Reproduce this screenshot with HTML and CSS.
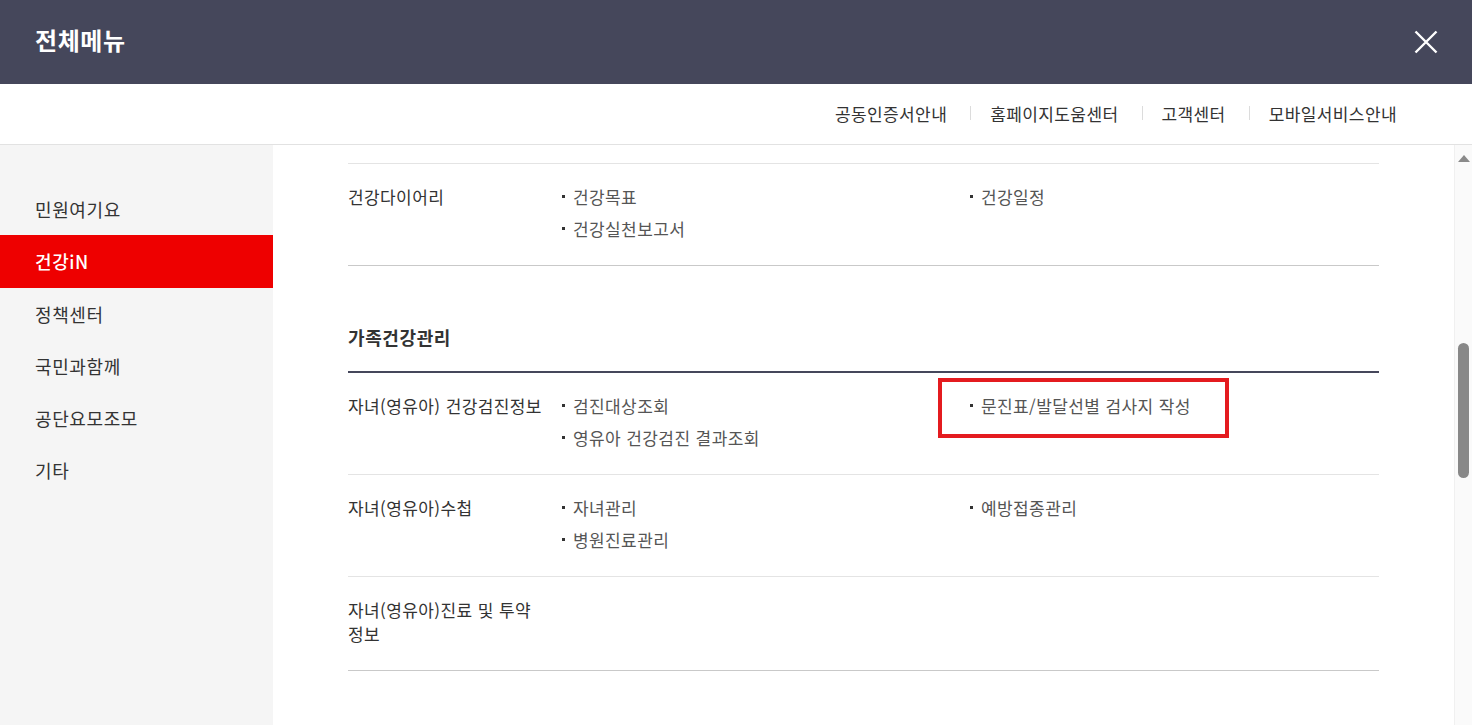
FILE: index.html
```html
<!DOCTYPE html>
<html lang="ko">
<head>
	<meta charset="UTF-8">
	<title>전체메뉴</title>
	<link rel="stylesheet" href="styles.css">
</head>
<body>
	<div class="allmenu">
		<header class="menu-head">
			<h1 class="menu-title">전체메뉴</h1>
			<button class="btn-close" type="button" aria-label="닫기">
				<svg width="24" height="24" viewBox="0 0 24 24"><path d="M1.5 1.5 L22.5 22.5 M22.5 1.5 L1.5 22.5" stroke="#fff" stroke-width="2.4" fill="none"/></svg>
			</button>
		</header>

		<nav class="util">
			<a href="#">공동인증서안내</a>
			<span class="bar"></span>
			<a href="#">홈페이지도움센터</a>
			<span class="bar"></span>
			<a href="#">고객센터</a>
			<span class="bar"></span>
			<a href="#">모바일서비스안내</a>
		</nav>

		<div class="menu-body">
			<ul class="side">
				<li><a href="#">민원여기요</a></li>
				<li class="on"><a href="#">건강iN</a></li>
				<li><a href="#">정책센터</a></li>
				<li><a href="#">국민과함께</a></li>
				<li><a href="#">공단요모조모</a></li>
				<li><a href="#">기타</a></li>
			</ul>

			<div class="menu-area">
				<ul class="menu-list">
					<li class="row">
						<strong class="row-tit">건강다이어리</strong>
						<ul class="sub">
							<li><a href="#">건강목표</a></li>
							<li><a href="#">건강일정</a></li>
							<li><a href="#">건강실천보고서</a></li>
						</ul>
					</li>
				</ul>

				<h3 class="group-tit">가족건강관리</h3>
				<ul class="menu-list">
					<li class="row">
						<strong class="row-tit">자녀(영유아) 건강검진정보</strong>
						<ul class="sub">
							<li><a href="#">검진대상조회</a></li>
							<li><a href="#">문진표/발달선별 검사지 작성</a><span class="mark"></span></li>
							<li><a href="#">영유아 건강검진 결과조회</a></li>
						</ul>
					</li>
					<li class="row">
						<strong class="row-tit">자녀(영유아)수첩</strong>
						<ul class="sub">
							<li><a href="#">자녀관리</a></li>
							<li><a href="#">예방접종관리</a></li>
							<li><a href="#">병원진료관리</a></li>
						</ul>
					</li>
					<li class="row">
						<strong class="row-tit">자녀(영유아)진료 및 투약 정보</strong>
						<ul class="sub"></ul>
					</li>
				</ul>
			</div>

			<div class="scrollbar">
				<span class="arrow"></span>
				<span class="thumb"></span>
			</div>
		</div>
	</div>
</body>
</html>
```

FILE: styles.css
```css
*{
	margin: 0;
	padding: 0;
	box-sizing: border-box;
}
html,body{
	height: 100%;
	overflow: hidden;
}
body{
	font-family: "Noto Sans CJK KR", "Noto Sans", sans-serif;
	color: #333;
	background: #fff;
}
ul{
	list-style: none;
}
a{
	color: inherit;
	text-decoration: none;
}
.allmenu{
	display: flex;
	flex-direction: column;
	height: 100vh;
}

/* 상단 */
.menu-head{
	height: 84px;
	background-color: #45475b;
	display: flex;
	align-items: center;
	justify-content: space-between;
	padding: 0 32px 6px 35px;
}
.menu-title{
	font-size: 24px;
	font-weight: bold;
	color: #fff;
	letter-spacing: 0.6px;
}
.btn-close{
	width: 28px;
	height: 28px;
	border: 0;
	background: none;
	display: flex;
	align-items: center;
	justify-content: center;
	margin-top: 6px;
}

/* 유틸 링크 */
.util{
	height: 61px;
	border-bottom: 1px solid #e2e2e2;
	display: flex;
	align-items: center;
	justify-content: flex-end;
	padding: 0 75px 2px 0;
	font-size: 17px;
	letter-spacing: 0.4px;
	color: #333;
}
.util .bar{
	width: 1px;
	height: 14px;
	background-color: #dcdcdc;
	margin: 0 19px 0 23px;
}

.menu-body{
	flex: 1;
	display: flex;
	min-height: 0;
}

/* 왼쪽 메뉴 */
.side{
	width: 273px;
	background-color: #f5f5f5;
	padding-top: 38px;
	flex-shrink: 0;
}
.side li a{
	display: block;
	height: 52.3px;
	line-height: 52px;
	padding-left: 35px;
	font-size: 18px;
	letter-spacing: 0.6px;
	color: #333;
}
.side li.on a{
	background-color: #ee0000;
	color: #fff;
	font-weight: 500;
}

/* 오른쪽 메뉴 */
.menu-area{
	flex: 1;
	padding: 18px 75px 0;
	overflow: hidden;
}
.menu-list{
	border-top: 1px solid #e4e4e4;
}
.row{
	display: flex;
	padding: 17px 0 20px;
	border-bottom: 1px solid #e4e4e4;
}
.menu-list .row:last-child{
	border-bottom-color: #c9c9c9;
}
.row-tit{
	width: 212px;
	flex-shrink: 0;
	padding: 4px 10px 4px 0;
	font-size: 17px;
	letter-spacing: 0.4px;
	font-weight: normal;
	line-height: 24px;
	color: #333;
}
.sub{
	flex: 1;
	display: grid;
	grid-template-columns: 408px 1fr;
}
.sub li{
	position: relative;
	padding-left: 13px;
	font-size: 17px;
	letter-spacing: 0.4px;
	line-height: 32px;
	color: #555;
}
.sub li:before{
	content: "";
	position: absolute;
	left: 2px;
	top: 14px;
	width: 3px;
	height: 3px;
	background-color: #333;
}
.group-tit{
	padding: 59px 0 22px;
	font-size: 18px;
	letter-spacing: 0.6px;
	line-height: 24px;
	font-weight: bold;
	color: #333;
	border-bottom: 2px solid #45475b;
}
.group-tit + .menu-list{
	border-top: 0;
}

/* 강조 표시 */
.mark{
	position: absolute;
	left: -30px;
	top: -12px;
	width: 291px;
	height: 60px;
	border: 4px solid #e41b1f;
}

/* 스크롤바 */
.scrollbar{
	width: 18px;
	flex-shrink: 0;
	background-color: #fafafa;
	border-left: 1px solid #f0f0f0;
	display: flex;
	flex-direction: column;
	align-items: center;
	padding-top: 10px;
}
.arrow{
	width: 0;
	height: 0;
	border-left: 6px solid transparent;
	border-right: 6px solid transparent;
	border-bottom: 7px solid #8a8a8a;
}
.thumb{
	width: 11px;
	height: 135px;
	margin-top: 181px;
	border-radius: 6px;
	background-color: #888;
}
```
